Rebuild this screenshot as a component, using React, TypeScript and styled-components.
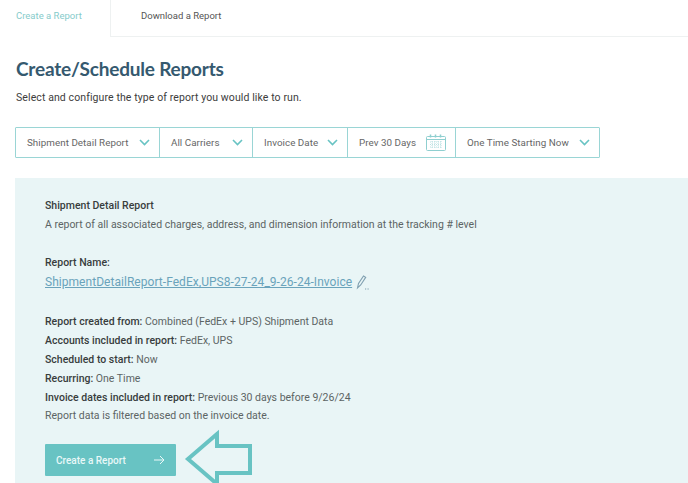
import React from "react";
import styled, { createGlobalStyle } from "styled-components";

const Global = createGlobalStyle`
  html, body { margin: 0; padding: 0; background: #fff; overflow: hidden; }
  body { font-family: Roboto, "Liberation Sans", sans-serif; }
`;

const Page = styled.div`
  width: 688px;
  height: 483px;
  overflow: hidden;
  display: flex;
  flex-direction: column;
`;

const Tabs = styled.div`
  display: flex;
  height: 37px;
  flex: none;
`;

const Tab = styled.div<{ $active?: boolean }>`
  box-sizing: border-box;
  font-size: 9.5px;
  padding-top: 10px;
  line-height: 12px;
  ${(p) =>
    p.$active
      ? `width: 111px; padding-left: 16px; color: #86cbcb; border-right: 1px solid #eef1f1;`
      : `flex: 1; padding-left: 30px; color: #555; border-bottom: 1px solid #eef1f1;`}
`;

const Title = styled.h1`
  margin: 20px 0 0 16px;
  height: 25px;
  font-size: 19px;
  line-height: 24px;
  font-weight: 700;
  letter-spacing: -0.2px;
  color: #35596f;
  font-family: Lato, Roboto, sans-serif;
`;

const Subtitle = styled.p`
  margin: 9px 0 0 16px;
  font-size: 10.5px;
  line-height: 14px;
  color: #3d3d3d;
  letter-spacing: 0.1px;
`;

const Filters = styled.div`
  display: flex;
  align-self: flex-start;
  box-sizing: border-box;
  height: 31px;
  margin: 22px 0 0 15px;
  border: 1px solid #9ad5d5;
  border-radius: 1px;
`;

const Filter = styled.div<{ $width: number }>`
  box-sizing: border-box;
  width: ${(p) => p.$width}px;
  display: flex;
  align-items: center;
  justify-content: space-between;
  padding: 0 9px 0 11px;
  font-size: 9.8px;
  letter-spacing: 0.05px;
  white-space: nowrap;
  color: #666;
  border-right: 1px solid #9ad5d5;
  &:last-child { border-right: none; }
`;

const Panel = styled.section`
  position: relative;
  flex: 1;
  margin: 20px 0 0 15px;
  padding: 19px 0 0 30px;
  background: #e9f5f6;
  font-size: 10.5px;
  line-height: 18.8px;
  color: #5c6464;
`;

const Line = styled.div<{ $gap?: number }>`
  margin-top: ${(p) => p.$gap ?? 0}px;
  white-space: nowrap;
`;

const Strong = styled.span`
  font-weight: 500;
  color: #383d3d;
`;

const NameLink = styled.div`
  display: flex;
  align-items: center;
  gap: 4px;
  font-size: 12px;
  line-height: 20px;
  letter-spacing: 0.04px;
  color: #6aa3bb;
`;

const Underlined = styled.span`
  text-decoration: underline;
`;

const CreateButton = styled.button`
  box-sizing: border-box;
  display: flex;
  align-items: center;
  justify-content: space-between;
  width: 131px;
  height: 32px;
  margin-top: 18px;
  padding: 0 11px;
  border: none;
  border-radius: 1px;
  background: #68c3c3;
  color: #e9f8f8;
  font-family: inherit;
  font-size: 10px;
  font-weight: 500;
`;

const Callout = styled.svg`
  position: absolute;
  left: 168px;
  top: 250px;
`;

const Chevron = () => (
  <svg width="11" height="7" viewBox="0 0 11 7" fill="none">
    <path d="M1 1l4.5 4.5L10 1" stroke="#68c3c3" strokeWidth="1.6" />
  </svg>
);

const Calendar = () => (
  <svg width="20" height="17" viewBox="0 0 20 17" fill="none" stroke="#8fcfd0">
    <rect x="0.5" y="2.5" width="19" height="14" rx="1" />
    <path d="M1 5.5h18" />
    <path d="M4.5 0.5v3M9.5 0.5v3M14.5 0.5v3" strokeWidth="1.5" />
    <path
      d="M4 8h12M4 10.5h12M4 13h12M6 7v7.5M9 7v7.5M12 7v7.5M15 7v7.5"
      strokeWidth="0.6"
      strokeDasharray="1 1"
    />
  </svg>
);

const Pencil = () => (
  <svg width="14" height="15" viewBox="0 0 14 15" fill="none" stroke="#7f9fb0" strokeWidth="1.1">
    <path d="M1.5 13l1-4.5L7.5 1l2.2 1.4-5 7.6z" />
    <path d="M9 14h1.2M11.5 14h1.2" />
  </svg>
);

const ArrowRight = () => (
  <svg width="11" height="10" viewBox="0 0 11 10" fill="none" stroke="#e9f8f8">
    <path d="M0 5h10M6 1l4 4-4 4" />
  </svg>
);

export default function App() {
  return (
    <Page>
      <Global />
      <Tabs>
        <Tab $active>Create a Report</Tab>
        <Tab>Download a Report</Tab>
      </Tabs>
      <Title>Create/Schedule Reports</Title>
      <Subtitle>Select and configure the type of report you would like to run.</Subtitle>
      <Filters>
        <Filter $width={144}>Shipment Detail Report<Chevron /></Filter>
        <Filter $width={93}>All Carriers<Chevron /></Filter>
        <Filter $width={95}>Invoice Date<Chevron /></Filter>
        <Filter $width={108}>Prev 30 Days<Calendar /></Filter>
        <Filter $width={143}>One Time Starting Now<Chevron /></Filter>
      </Filters>
      <Panel>
        <Line><Strong>Shipment Detail Report</Strong></Line>
        <Line>A report of all associated charges, address, and dimension information at the tracking # level</Line>
        <Line $gap={19}><Strong>Report Name:</Strong></Line>
        <NameLink>
          <Underlined>ShipmentDetailReport-FedEx,UPS8-27-24_9-26-24-Invoice</Underlined>
          <Pencil />
        </NameLink>
        <Line $gap={21}><Strong>Report created from:</Strong> Combined (FedEx + UPS) Shipment Data</Line>
        <Line><Strong>Accounts included in report:</Strong> FedEx, UPS</Line>
        <Line><Strong>Scheduled to start:</Strong> Now</Line>
        <Line><Strong>Recurring:</Strong> One Time</Line>
        <Line><Strong>Invoice dates included in report:</Strong> Previous 30 days before 9/26/24</Line>
        <Line>Report data is filtered based on the invoice date.</Line>
        <CreateButton>Create a Report<ArrowRight /></CreateButton>
        <Callout width="72" height="62" viewBox="0 0 72 62" fill="none">
          <path d="M34 6L5 31l29 25V45h33V18H34z" stroke="#68c3c3" strokeWidth="4" />
        </Callout>
      </Panel>
    </Page>
  );
}
